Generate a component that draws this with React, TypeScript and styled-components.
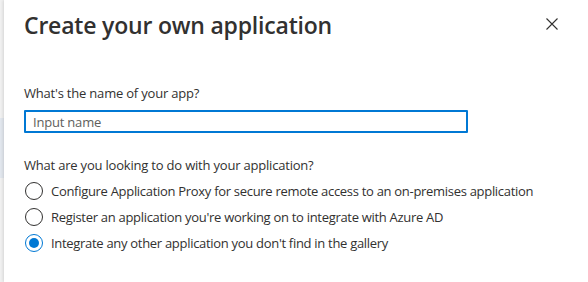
import styled, { createGlobalStyle } from "styled-components";

const GlobalStyle = createGlobalStyle`
  html, body {
    margin: 0;
    padding: 0;
    background: #ffffff;
  }
  body {
    font-family: "Open Sans", "Noto Sans", sans-serif;
    color: #323130;
  }
`;

const Screen = styled.div`
  display: flex;
  width: 588px;
  height: 282px;
  overflow: hidden;
`;

const Backdrop = styled.div`
  width: 4px;
  display: flex;
  flex-direction: column;
  background: #f1f1f1;
`;

const BackdropBand = styled.div<{ $h: number; $tint?: boolean }>`
  height: ${(p) => p.$h}px;
  background: ${(p) => (p.$tint ? "#e2e7ee" : "transparent")};
`;

const Panel = styled.div`
  flex: 1;
  background: #ffffff;
  box-shadow: -1px 0 3px rgba(0, 0, 0, 0.12);
  padding: 0 0 0 20px;
`;

const Header = styled.div`
  display: flex;
  align-items: flex-start;
  justify-content: space-between;
  padding-top: 9px;
  height: 40px;
`;

const Title = styled.h1`
  margin: 0;
  font-size: 23px;
  font-weight: 600;
  letter-spacing: -0.2px;
  line-height: 32px;
  color: #323130;
`;

const CloseButton = styled.button`
  border: none;
  background: transparent;
  padding: 0;
  margin: 8px 29px 0 0;
  width: 14px;
  height: 14px;
  display: flex;
  align-items: center;
  justify-content: center;
  color: #323130;
`;

const Form = styled.div`
  display: flex;
  flex-direction: column;
  padding-top: 34px;
`;

const Label = styled.label`
  font-size: 13px;
  letter-spacing: -0.2px;
  line-height: 20px;
  color: #323130;
  margin-bottom: 7px;
  white-space: nowrap;
`;

const TextInput = styled.input`
  box-sizing: border-box;
  width: 444px;
  height: 23px;
  border: 2px solid #0078d4;
  border-radius: 1px;
  padding: 0 7px;
  font-family: inherit;
  font-size: 13px;
  letter-spacing: -0.2px;
  color: #323130;
  outline: none;
  &::placeholder {
    color: #605e5c;
  }
`;

const Question = styled(Label)`
  margin-top: 22px;
  margin-bottom: 6px;
`;

const Options = styled.div`
  display: flex;
  flex-direction: column;
  gap: 6px;
`;

const Option = styled.label`
  display: flex;
  align-items: center;
  gap: 8px;
  height: 20px;
  font-size: 13px;
  letter-spacing: -0.3px;
  color: #323130;
  white-space: nowrap;
`;

const Circle = styled.span<{ $checked?: boolean }>`
  box-sizing: border-box;
  flex: none;
  width: 18px;
  height: 18px;
  border-radius: 50%;
  border: 1px solid ${(p) => (p.$checked ? "#0078d4" : "#323130")};
  display: flex;
  align-items: center;
  justify-content: center;
  margin-left: 1px;
  &::after {
    content: "";
    width: 10px;
    height: 10px;
    border-radius: 50%;
    background: ${(p) => (p.$checked ? "#0078d4" : "transparent")};
  }
`;

const choices = [
  "Configure Application Proxy for secure remote access to an on-premises application",
  "Register an application you're working on to integrate with Azure AD",
  "Integrate any other application you don't find in the gallery",
];

export default function App() {
  return (
    <>
      <GlobalStyle />
      <Screen>
        <Backdrop>
          <BackdropBand $h={118} />
          <BackdropBand $h={60} $tint />
        </Backdrop>
        <Panel>
          <Header>
            <Title>Create your own application</Title>
            <CloseButton aria-label="Close">
              <svg width="12" height="12" viewBox="0 0 12 12">
                <path d="M0.5 0.5 L11.5 11.5 M11.5 0.5 L0.5 11.5" stroke="#323130" strokeWidth="1.1" />
              </svg>
            </CloseButton>
          </Header>
          <Form>
            <Label>What's the name of your app?</Label>
            <TextInput placeholder="Input name" autoFocus />
            <Question>What are you looking to do with your application?</Question>
            <Options>
              {choices.map((c, i) => (
                <Option key={c}>
                  <Circle $checked={i === 2} />
                  {c}
                </Option>
              ))}
            </Options>
          </Form>
        </Panel>
      </Screen>
    </>
  );
}
